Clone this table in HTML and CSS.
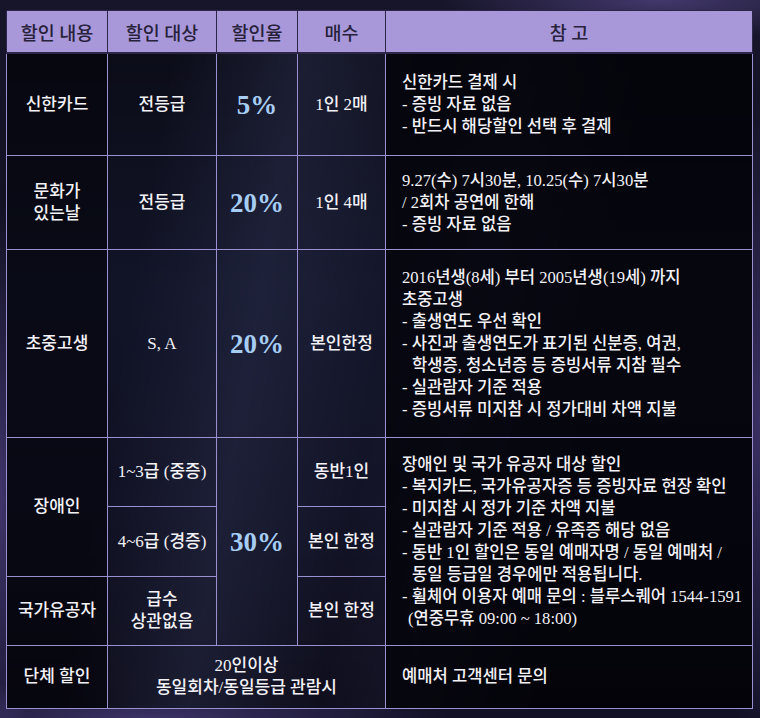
FILE: index.html
```html
<!DOCTYPE html>
<html lang="ko">
<head>
<meta charset="utf-8">
<title>할인 안내</title>
<link rel="stylesheet" href="styles.css">
</head>
<body>
<div class="wrap">
<table class="disc">
  <colgroup>
    <col class="c1"><col class="c2"><col class="c3"><col class="c4"><col class="c5">
  </colgroup>
  <thead>
    <tr class="rh">
      <th>할인 내용</th><th>할인 대상</th><th>할인율</th><th>매수</th><th>참 고</th>
    </tr>
  </thead>
  <tbody>
    <tr class="r1">
      <td class="k">신한카드</td>
      <td class="m">전등급</td>
      <td class="m pct">5%</td>
      <td class="m">1인 2매</td>
      <td class="note">
        <div>신한카드 결제 시</div>
        <div>- 증빙 자료 없음</div>
        <div>- 반드시 해당할인 선택 후 결제</div>
      </td>
    </tr>
    <tr class="r2">
      <td class="k">문화가<br>있는날</td>
      <td class="m">전등급</td>
      <td class="m pct">20%</td>
      <td class="m">1인 4매</td>
      <td class="note">
        <div>9.27(수) 7시30분, 10.25(수) 7시30분</div>
        <div>/ 2회차 공연에 한해</div>
        <div>- 증빙 자료 없음</div>
      </td>
    </tr>
    <tr class="r3">
      <td class="k">초중고생</td>
      <td class="m">S, A</td>
      <td class="m pct">20%</td>
      <td class="m">본인한정</td>
      <td class="note">
        <div>2016년생(8세) 부터 2005년생(19세) 까지</div>
        <div>초중고생</div>
        <div>- 출생연도 우선 확인</div>
        <div>- 사진과 출생연도가 표기된 신분증, 여권,</div>
        <div class="ind">학생증, 청소년증 등 증빙서류 지참 필수</div>
        <div>- 실관람자 기준 적용</div>
        <div>- 증빙서류 미지참 시 정가대비 차액 지불</div>
      </td>
    </tr>
    <tr class="r4a">
      <td class="k" rowspan="2">장애인</td>
      <td class="m">1~3급 (중증)</td>
      <td class="m pct" rowspan="3">30%</td>
      <td class="m">동반1인</td>
      <td class="note" rowspan="3">
        <div>장애인 및 국가 유공자 대상 할인</div>
        <div>- 복지카드, 국가유공자증 등 증빙자료 현장 확인</div>
        <div>- 미지참 시 정가 기준 차액 지불</div>
        <div>- 실관람자 기준 적용 / 유족증 해당 없음</div>
        <div>- 동반 1인 할인은 동일 예매자명 / 동일 예매처 /</div>
        <div class="ind">동일 등급일 경우에만 적용됩니다.</div>
        <div>- 휠체어 이용자 예매 문의 : 블루스퀘어 1544-1591</div>
        <div class="ind2">(연중무휴 09:00 ~ 18:00)</div>
      </td>
    </tr>
    <tr class="r4b">
      <td class="m">4~6급 (경증)</td>
      <td class="m">본인 한정</td>
    </tr>
    <tr class="r5">
      <td class="k">국가유공자</td>
      <td class="m">급수<br>상관없음</td>
      <td class="m">본인 한정</td>
    </tr>
    <tr class="r6">
      <td class="k">단체 할인</td>
      <td class="m" colspan="3">20인이상<br>동일회차/동일등급 관람시</td>
      <td class="note">
        <div>예매처 고객센터 문의</div>
      </td>
    </tr>
  </tbody>
</table>
</div>
</body>
</html>
```

FILE: styles.css
```css
html, body {
  margin: 0;
  padding: 0;
}
body {
  width: 760px;
  height: 718px;
  overflow: hidden;
  background:
    radial-gradient(ellipse 220px 40px at 660px 0px, rgba(120, 100, 190, 0.45), rgba(0,0,0,0) 100%),
    radial-gradient(ellipse 40px 300px at 0px 500px, rgba(110, 90, 180, 0.5), rgba(0,0,0,0) 100%),
    radial-gradient(ellipse 60px 320px at 760px 420px, rgba(110, 90, 180, 0.45), rgba(0,0,0,0) 100%),
    radial-gradient(ellipse 300px 40px at 150px 718px, rgba(110, 90, 180, 0.45), rgba(0,0,0,0) 100%),
    linear-gradient(180deg, #17152a 0%, #100f20 50%, #121126 100%);
  font-family: "Liberation Serif", "Noto Sans CJK KR", serif;
  color: #f2f1f6;
}
.wrap {
  padding: 10px 8px 0 6px;
}
.disc {
  width: 746px;
  table-layout: fixed;
  border-collapse: collapse;
  background:
    linear-gradient(100deg, rgba(40, 44, 72, 0) 20%, rgba(40, 44, 72, 0.55) 35%, rgba(30, 32, 56, 0.2) 50%, rgba(40, 40, 70, 0.35) 60%, rgba(0,0,0,0) 75%),
    linear-gradient(180deg, #0b0b16 0%, #111427 40%, #0f1022 70%, #0b0a16 100%);
}
.c1 { width: 101px; }
.c2 { width: 109px; }
.c3 { width: 81px; }
.c4 { width: 88px; }
.c5 { width: 367px; }

.disc th {
  background: #a898da;
  color: #27223a;
  font-weight: 500;
  font-size: 18.5px;
  height: 41px;
  padding: 0;
  border: 1px solid #2c2748;
  border-bottom: 2px solid #2c2748;
  text-align: center;
  vertical-align: middle;
}
.disc td {
  border: 1px solid #9b90cf;
  font-size: 17px;
  font-weight: 500;
  line-height: 22px;
  text-align: center;
  vertical-align: middle;
  padding: 0;
  white-space: nowrap;
}
.disc td.k {
  background: rgba(3, 3, 10, 0.55);
}
.disc td.note {
  text-align: left;
  padding-left: 16px;
  background: rgba(2, 2, 6, 0.72);
  font-size: 16.6px;
  line-height: 22px;
}
.note .ind {
  padding-left: 10px;
}
.note .ind2 {
  padding-left: 6px;
}
.disc td.pct {
  font-size: 27px;
  font-weight: bold;
  color: #a7cdf4;
}
.r1 td { height: 101px; }
.r2 td { height: 93px; }
.r3 td { height: 187px; }
.r4a td { height: 68px; }
.r4b td { height: 69px; }
.r5 td { height: 68px; }
.r6 td { height: 62px; }
.r4a td.note { height: auto; }
.r4a td.pct, .r4a td[rowspan="2"] { height: auto; }
```
